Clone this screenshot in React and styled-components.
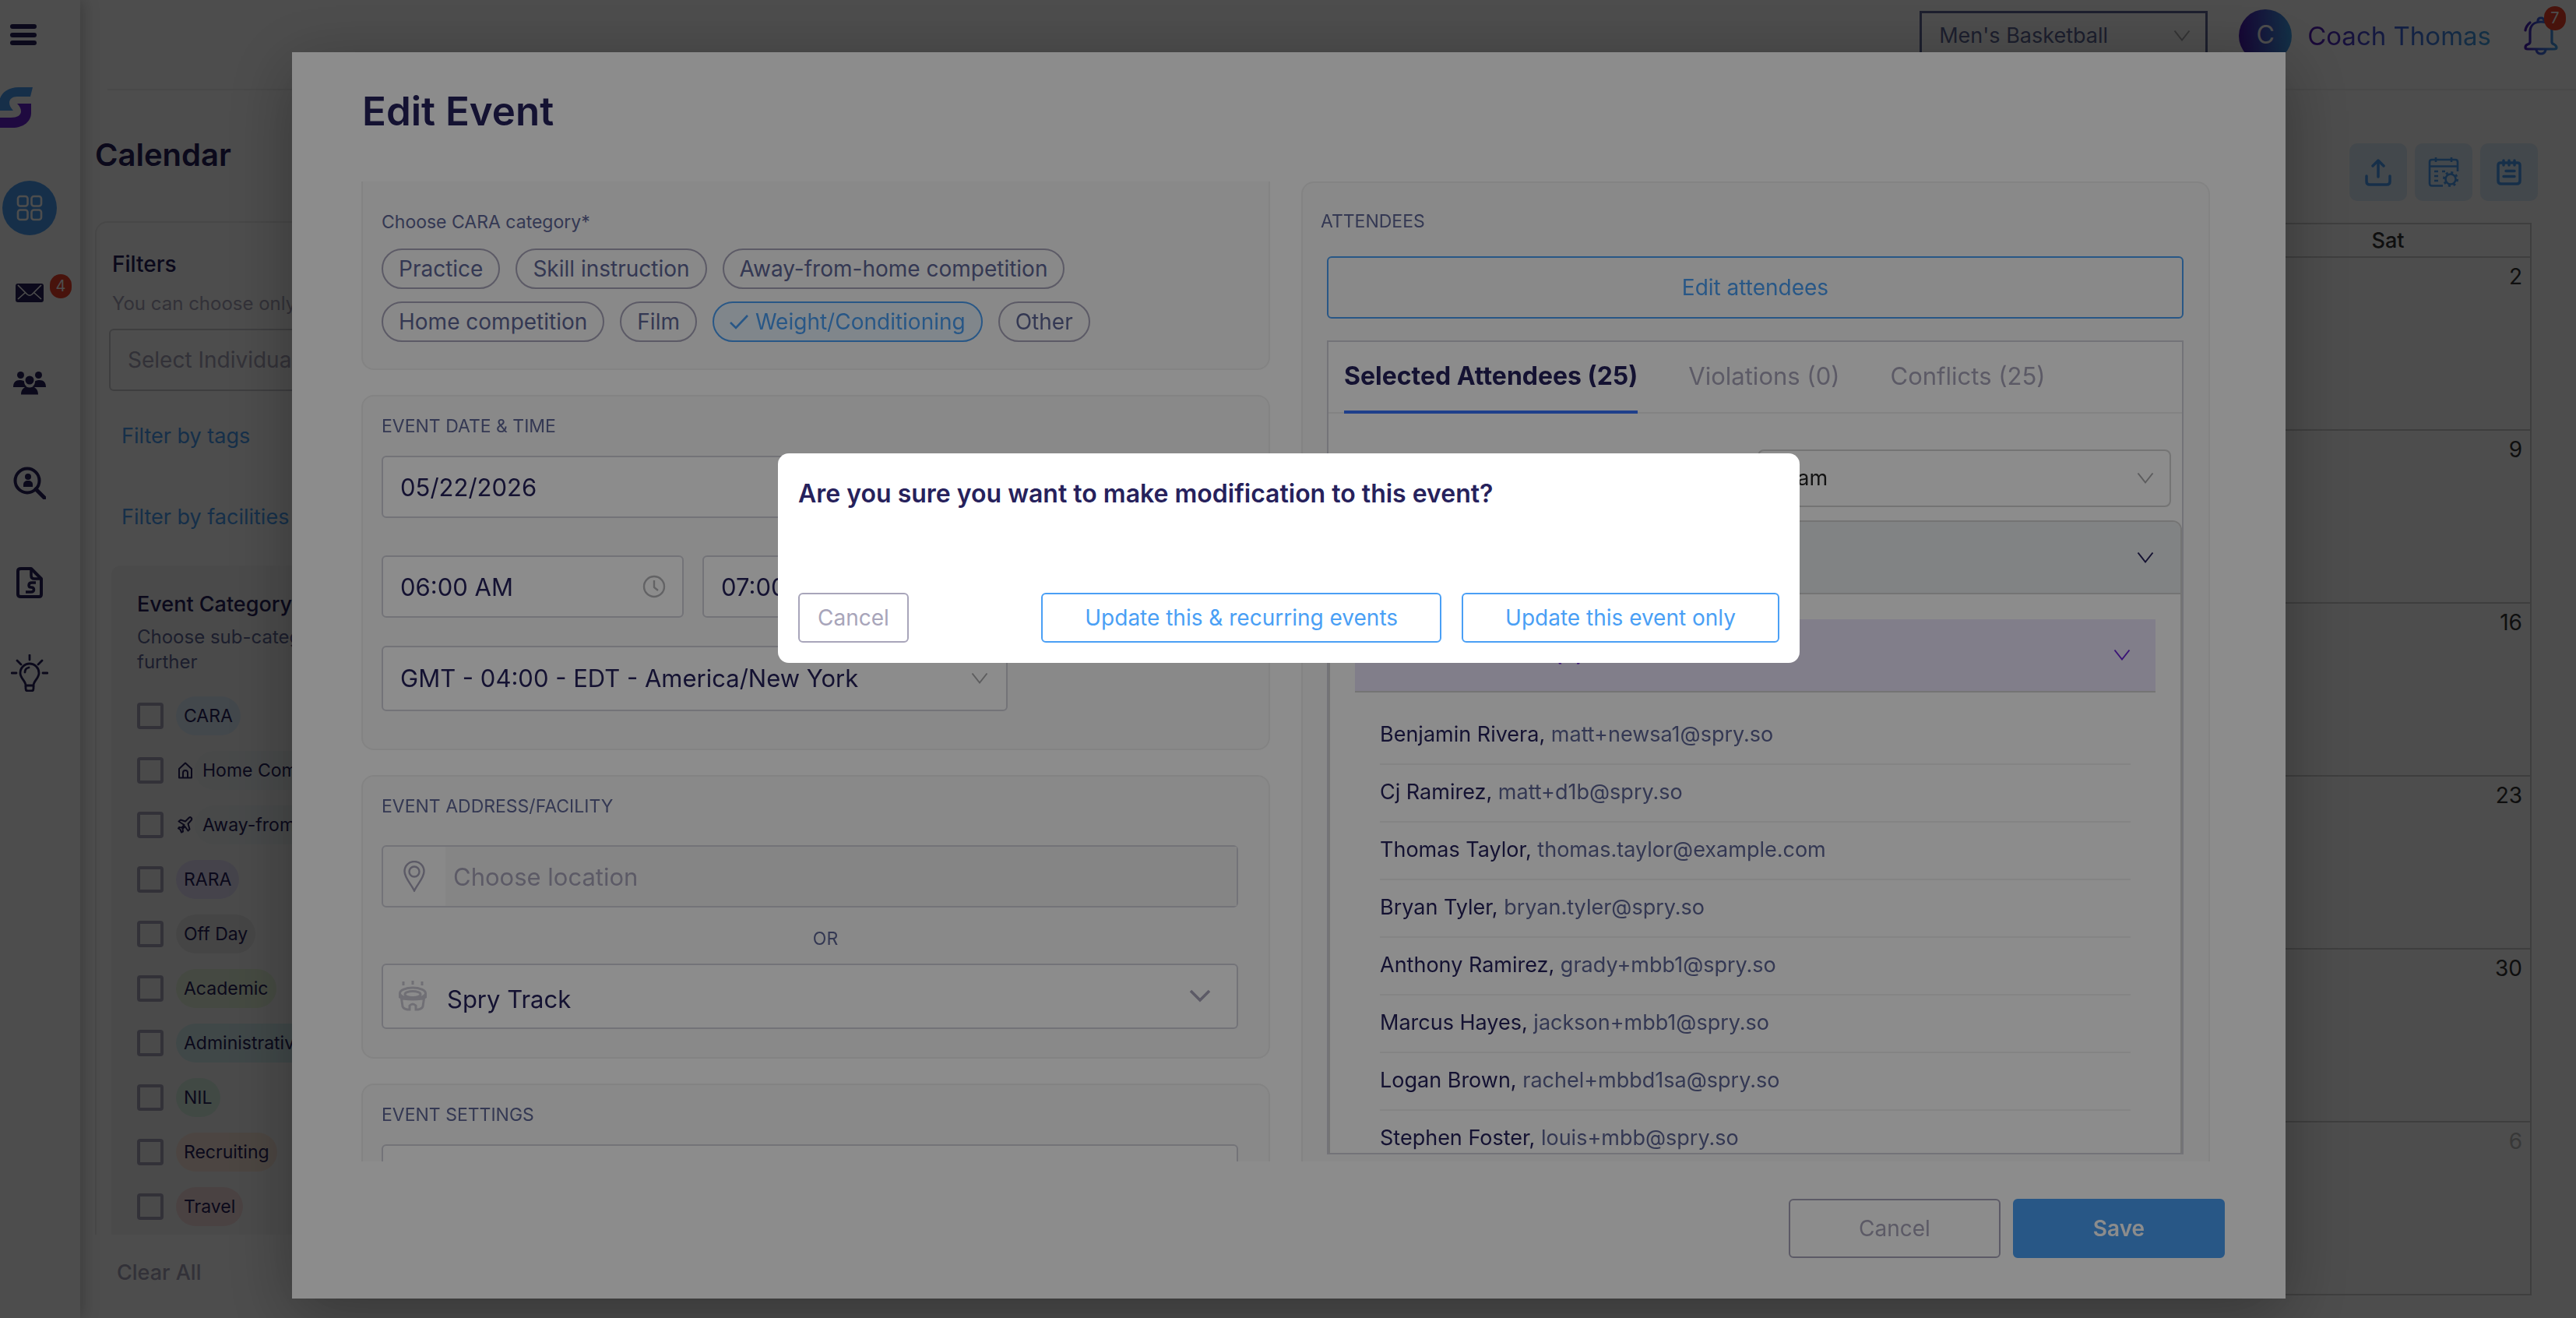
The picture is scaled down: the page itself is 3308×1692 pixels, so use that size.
import React from "react";
import styled, { createGlobalStyle } from "styled-components";

const navy = "#26215b";
const slate = "#5f6797";
const muted = "#a8a5ba";
const blue = "#4a9ff5";
const line = "#d2d2da";

const GlobalStyle = createGlobalStyle`
  * { box-sizing: border-box; }
  html, body, #root { height: 100%; }
  body {
    margin: 0;
    overflow: hidden;
    background: #fff;
    color: ${navy};
    font-family: Inter, "Liberation Sans", sans-serif;
    font-size: 28px;
    line-height: 36px;
  }
  h1, h2, h3, p, ul { margin: 0; padding: 0; }
  ul { list-style: none; }
  button, input, select { font: inherit; color: inherit; }
  a { text-decoration: none; color: inherit; }
`;

/* page shell */

const Shell = styled.div`
  display: flex;
  height: 100vh;
`;
const Sidebar = styled.nav`
  width: 103px;
  flex: none;
  display: flex;
  flex-direction: column;
  padding-top: 31px;
  box-shadow: 2px 0 20px rgba(0, 0, 0, 0.25);
  z-index: 1;
`;
const MenuButton = styled.button`
  width: 34px;
  height: 27px;
  margin-left: 13px;
  padding: 0;
  border: 0;
  background: none;
  display: flex;
  flex-direction: column;
  justify-content: space-between;

  span {
    height: 6px;
    border-radius: 3px;
    background: ${navy};
  }
`;
const Logo = styled.svg`
  display: block;
  width: 42px;
  height: 52px;
  margin: 54px 0 52px;
`;
const NavItem = styled.a`
  position: relative;
  display: flex;
  align-items: center;
  justify-content: center;
  width: 76px;
  height: ${(p) => p.$height || 116}px;
`;
const NavActive = styled.span`
  display: flex;
  align-items: center;
  justify-content: center;
  width: 70px;
  height: 70px;
  border-radius: 50%;
  background: ${blue};
`;
const Badge = styled.span`
  position: absolute;
  left: ${(p) => p.$left}px;
  top: ${(p) => p.$top}px;
  width: 28px;
  height: 31px;
  border-radius: 14px;
  background: #f04028;
  color: #fff;
  font-size: 20px;
  line-height: 31px;
  text-align: center;
`;
const Main = styled.main`
  flex: 1;
  min-width: 0;
  display: flex;
  flex-direction: column;
`;
const TopBar = styled.header`
  height: 116px;
  flex: none;
  margin-left: 35px;
  padding: 0 23px 22px 0;
  border-bottom: 2px solid #f0f0f0;
  display: flex;
  align-items: center;
  justify-content: flex-end;
`;
const TeamPicker = styled.div`
  position: relative;
  width: 370px;
  margin-right: 40px;

  select {
    appearance: none;
    width: 100%;
    height: 64px;
    padding: 0 22px;
    border: 3px solid ${slate};
    background: #fff;
    color: ${slate};
    font-size: 27px;
  }
`;
const Avatar = styled.span`
  width: 68px;
  height: 68px;
  margin-right: 20px;
  border-radius: 50%;
  background: linear-gradient(90deg, #4a18b0, #3f9fe8);
  color: #fff;
  font-size: 32px;
  line-height: 66px;
  text-align: center;
`;
const CoachName = styled.span`
  background: linear-gradient(90deg, #5414b4, #3f68e0 50%, #45a5e6);
  background-clip: text;
  color: transparent;
  font-size: 33px;
  line-height: 44px;
`;
const Bell = styled.button`
  position: relative;
  width: 44px;
  height: 50px;
  margin-left: 42px;
  padding: 0;
  border: 0;
  background: none;
`;
const TitleRow = styled.div`
  display: flex;
  justify-content: space-between;
  align-items: flex-start;
  padding: 68px 49px 0 19px;
  height: 168px;
  flex: none;

  h1 {
    font-size: 40px;
    line-height: 30px;
    font-weight: 600;
  }
`;
const Actions = styled.div`
  display: flex;
  gap: 10px;
`;
const ActionButton = styled.button`
  width: 74px;
  height: 74px;
  padding: 0;
  border: 0;
  border-radius: 10px;
  background: #dfeefb;
  display: flex;
  align-items: center;
  justify-content: center;
`;
const Content = styled.div`
  flex: 1;
  min-height: 0;
  display: flex;
  gap: 31px;
  padding: 0 57px 31px 19px;
`;

/* filters */

const FilterColumn = styled.aside`
  width: 528px;
  flex: none;
  display: flex;
  flex-direction: column;
`;
const FilterPanel = styled.section`
  flex: 1;
  min-height: 0;
  overflow: hidden;
  padding: 35px 20px 0 16px;
  border: 2px solid #ececec;
  border-bottom: 0;
  border-radius: 16px 16px 0 0;
`;
const FilterTitle = styled.h2`
  padding-left: 4px;
  font-size: 28px;
  font-weight: 500;
`;
const FilterHint = styled.p`
  padding-left: 4px;
  margin: 17px 0 16px;
  font-size: 24px;
  line-height: 32px;
  color: ${muted};
`;
const FilterInput = styled.input`
  width: 100%;
  height: 80px;
  padding: 0 22px;
  border: 2px solid #cfcfd4;
  border-radius: 6px;
  background: #fff;

  &::placeholder { color: ${muted}; opacity: 1; }
`;
const FilterLink = styled.a`
  display: block;
  margin: ${(p) => p.$space}px 0 0 16px;
  font-size: 27px;
  color: ${blue};
`;
const CategoryCard = styled.div`
  margin: 44px 0 0 3px;
  padding: 32px 32px 30px 33px;
  border-radius: 12px;
  background: #f8f8f8;

  h3 {
    font-size: 27px;
    font-weight: 500;
  }
  p {
    margin: 8px 0 28px;
    font-size: 24px;
    line-height: 32px;
    color: ${slate};
  }
  ul {
    display: flex;
    flex-direction: column;
    gap: 20px;
  }
`;
const CheckRow = styled.label`
  display: flex;
  align-items: center;
  height: 50px;

  input {
    appearance: none;
    flex: none;
    width: 34px;
    height: 34px;
    margin: 0 16px 0 0;
    border: 4px solid ${muted};
    border-radius: 4px;
  }
  svg {
    flex: none;
    margin: 0 2px;
  }
`;
const Tag = styled.span`
  padding: 0 10px;
  border-radius: 25px;
  background: ${(p) => p.$color};
  font-size: 23px;
  line-height: 50px;
  white-space: nowrap;
`;
const ClearAll = styled.button`
  align-self: flex-start;
  margin: 31px 0 9px 28px;
  padding: 0;
  border: 0;
  background: none;
  color: ${muted};
  font-size: 27px;
  font-weight: 500;
`;

/* month grid */

const MonthWrap = styled.div`
  flex: 1;
  min-width: 0;
  padding-top: 2px;
`;
const Month = styled.table`
  width: 100%;
  height: 100%;
  border-collapse: collapse;
  table-layout: fixed;
  color: #333;

  th, td { border: 2px solid #d0d0d0; }
  th {
    height: 43px;
    padding: 0;
    font-size: 27px;
    font-weight: 500;
  }
  td {
    height: 222px;
    padding: 6px 10px 0 0;
    vertical-align: top;
    text-align: right;
  }
`;
const DayNumber = styled.span`
  color: ${(p) => (p.$other ? "#bbb" : "#333")};
`;

/* event modal */

const ModalLayer = styled.div`
  position: fixed;
  inset: 0;
  z-index: 2;
  padding: 67px 373px 25px 375px;
  background: rgba(0, 0, 0, 0.45);
`;
const Modal = styled.div`
  height: 100%;
  display: flex;
  flex-direction: column;
  padding-top: 48px;
  background: #fff;
  box-shadow: 0 20px 80px rgba(0, 0, 0, 0.3);

  h2 {
    padding-left: 90px;
    font-size: 51px;
    line-height: 56px;
    font-weight: 600;
  }
`;
const ModalBody = styled.div`
  flex: 1;
  min-height: 0;
  overflow: hidden;
  margin: 62px 97px 0 89px;
  display: grid;
  grid-template-columns: 1fr 1fr;
  gap: 40px;
`;
const Column = styled.div`
  min-height: 0;
  display: flex;
  flex-direction: column;
  gap: 32px;
`;
const Card = styled.section`
  flex: none;
  padding: 22px 39px ${(p) => p.$bottom || 0}px 24px;
  border: 2px solid #efefef;
  border-radius: 16px;
  background: #f9f9f9;
`;
const ScrolledCard = styled(Card)`
  padding-top: 36px;
  border-top: 0;
  border-radius: 0 0 16px 16px;
`;
const Label = styled.label`
  display: block;
  margin-bottom: ${(p) => p.$space || 22}px;
  font-size: 23px;
  line-height: 32px;
  color: ${slate};
`;
const Pills = styled.div`
  display: flex;
  flex-wrap: wrap;
  gap: 16px 20px;
`;
const Pill = styled.button`
  display: flex;
  align-items: center;
  gap: 9px;
  height: 52px;
  padding: 0 20px;
  border: 2px solid ${(p) => (p.$on ? blue : muted)};
  border-radius: 26px;
  background: ${(p) => (p.$on ? "#eaf4fe" : "transparent")};
  color: ${(p) => (p.$on ? blue : slate)};
`;
const Field = styled.div`
  position: relative;
  width: ${(p) => p.$width || "100%"};
  margin-bottom: ${(p) => p.$space || 0}px;
`;
const fieldLook = `
  display: block;
  width: 100%;
  padding: 0 22px;
  border: 2px solid ${line};
  border-radius: 6px;
  background: #fff;
  font-size: 31px;
`;
const TextInput = styled.input`
  ${fieldLook}
  height: 80px;
`;
const Select = styled.select`
  ${fieldLook}
  appearance: none;
  height: 84px;
  padding: ${(p) => (p.$icon ? "8px 82px 0" : "0 22px")};
`;
const LocationBox = styled.div`
  display: flex;
  align-items: center;
  height: 80px;
  border: 2px solid ${line};
  border-radius: 6px;

  svg { margin: 0 25px; }
  input {
    flex: 1;
    height: 76px;
    padding: 0 10px;
    border: 0;
    background: #f3f3f3;
    font-size: 31px;
  }
  input::placeholder { color: ${muted}; opacity: 1; }
`;
const FieldIcon = styled.svg`
  position: absolute;
  top: 50%;
  transform: translateY(-50%);
  ${(p) => (p.$left ? `left: ${p.$left}px;` : `right: ${p.$right}px;`)}
  pointer-events: none;
`;
const Times = styled.div`
  display: flex;
  gap: 24px;
  width: 800px;
  margin-bottom: 36px;
`;
const Or = styled.p`
  margin: 24px 0 16px 40px;
  font-size: 23px;
  line-height: 32px;
  color: ${slate};
  text-align: center;
`;

/* attendees */

const AttendeeCard = styled(Card)`
  flex: 1;
  min-height: 0;
  display: flex;
  flex-direction: column;
  padding: 33px 32px 9px 23px;
  border-bottom: 0;
  border-radius: 16px 16px 0 0;
`;
const CardTitle = styled(Label).attrs({ as: "h3" })`
  margin: 0 0 29px;
  font-weight: 400;
`;
const OutlineButton = styled.button`
  height: ${(p) => p.$height}px;
  padding: 0 ${(p) => p.$pad || 0}px;
  border: 2px solid ${(p) => (p.$muted ? muted : blue)};
  border-radius: 6px;
  background: transparent;
  color: ${(p) => (p.$muted ? muted : blue)};
`;
const EditAttendees = styled(OutlineButton)`
  flex: none;
  margin: 0 0 28px 8px;
`;
const AttendeeBox = styled.div`
  flex: 1;
  min-height: 0;
  overflow: hidden;
  margin-left: 8px;
  border: 2px solid ${line};
  background: #fff;
`;
const Tabs = styled.div`
  display: flex;
  gap: 65px;
  height: 92px;
  padding-left: 20px;
  border-bottom: 2px solid #efefef;
`;
const Tab = styled.button`
  height: 92px;
  padding: 0;
  border: 0;
  border-bottom: 4px solid ${(p) => (p.$on ? "#3873fd" : "transparent")};
  background: none;
  color: ${(p) => (p.$on ? navy : muted)};
  font-size: ${(p) => (p.$on ? 32 : 31)}px;
  font-weight: ${(p) => (p.$on ? 700 : 400)};
`;
const GroupBy = styled.div`
  position: relative;
  width: 531px;
  margin: 46px 14px 17px auto;

  select {
    appearance: none;
    width: 100%;
    height: 74px;
    padding: 0 18px;
    border: 2px solid #d4d4d4;
    border-radius: 8px;
    background: #fff;
    color: #222;
    font-size: 27px;
  }
`;
const Accordion = styled.div`
  border: 2px solid #d4d4d4;
  border-radius: 12px 12px 0 0;
  overflow: hidden;
`;
const GroupHeader = styled.button`
  display: flex;
  align-items: center;
  justify-content: flex-end;
  width: 100%;
  height: 93px;
  padding: 0 34px;
  border: 0;
  border-bottom: 2px solid #d4d4d4;
  background: #eceef0;
`;
const RoleHeader = styled(GroupHeader)`
  justify-content: space-between;
  height: 94px;
  padding: 0 32px;
  background: #ece5fb;
  color: #6a24d8;
  font-size: 27px;
  font-weight: 600;
`;
const GroupBody = styled.div`
  padding: 32px;
`;
const People = styled.ul`
  padding: 19px 32px;
`;
const Person = styled.li`
  height: 74px;
  padding-top: 17px;
  border-bottom: 2px solid #f0f0f0;
  font-size: 27px;

  span { color: ${slate}; }
`;
const ModalFooter = styled.footer`
  display: flex;
  justify-content: flex-end;
  gap: 16px;
  padding: 48px 78px 52px;
`;
const FooterButton = styled.button`
  width: 272px;
  height: 76px;
  border: 2px solid ${(p) => (p.$primary ? blue : muted)};
  border-radius: 6px;
  background: ${(p) => (p.$primary ? blue : "#fff")};
  color: ${(p) => (p.$primary ? "#fff" : muted)};
  font-weight: ${(p) => (p.$primary ? 600 : 400)};
`;

/* confirmation */

const ConfirmLayer = styled.div`
  position: fixed;
  inset: 0;
  z-index: 3;
  display: flex;
  justify-content: center;
  align-items: flex-start;
  padding: 582px 0 0 2px;
  background: rgba(0, 0, 0, 0.45);
`;
const Confirm = styled.div`
  width: 1312px;
  max-width: 90%;
  padding: 32px 26px 26px;
  border-radius: 14px;
  background: #fff;

  h2 {
    margin-bottom: 107px;
    font-size: 32px;
    line-height: 40px;
    font-weight: 600;
  }
`;
const ConfirmActions = styled.div`
  display: flex;
  gap: 26px;

  button:first-child { margin-right: auto; }
`;

const categories = [
  { name: "CARA", color: "#dfeefb" },
  { name: "Home Competition", color: "#eef4f5", icon: "home" },
  { name: "Away-from-home Competition", color: "#eef4f5", icon: "plane" },
  { name: "RARA", color: "#e6e0fa" },
  { name: "Off Day", color: "#e8e8e8" },
  { name: "Academic", color: "#e6f5da" },
  { name: "Administrative", color: "#d6eff0" },
  { name: "NIL", color: "#d9f2e4" },
  { name: "Recruiting", color: "#fbe8da" },
  { name: "Travel", color: "#f8dcdc" },
];

const caraOptions = [
  "Practice",
  "Skill instruction",
  "Away-from-home competition",
  "Home competition",
  "Film",
  "Weight/Conditioning",
  "Other",
];

const attendees = [
  ["Benjamin Rivera", "matt+newsa1@spry.so"],
  ["Cj Ramirez", "matt+d1b@spry.so"],
  ["Thomas Taylor", "thomas.taylor@example.com"],
  ["Bryan Tyler", "bryan.tyler@spry.so"],
  ["Anthony Ramirez", "grady+mbb1@spry.so"],
  ["Marcus Hayes", "jackson+mbb1@spry.so"],
  ["Logan Brown", "rachel+mbbd1sa@spry.so"],
  ["Stephen Foster", "louis+mbb@spry.so"],
];

const saturdays = [2, 9, 16, 23, 30, 6];
const weekdays = [0, 1, 2, 3, 4, 5];

const Chevron = ({ color }) => (
  <svg width="22" height="16" viewBox="0 0 22 16" fill="none" stroke={color} strokeWidth="2">
    <path d="M1.5 1.5 11 13.5 20.5 1.5" />
  </svg>
);

const FieldChevron = ({ right }) => (
  <FieldIcon $right={right} width="22" height="16" viewBox="0 0 22 16" fill="none" stroke="#a9a9ac" strokeWidth="2">
    <path d="M1.5 1.5 11 13.5 20.5 1.5" />
  </FieldIcon>
);

const Clock = () => (
  <FieldIcon $right={23} width="30" height="30" viewBox="0 0 30 30" fill="none" stroke="#b4b4b8" strokeWidth="2.4">
    <circle cx="15" cy="15" r="13" />
    <path d="M15 7v9l5 4" />
  </FieldIcon>
);

const SmallIcon = ({ name }) => (
  <svg width="20" height="22" viewBox="0 0 20 22" fill="none" stroke={navy} strokeWidth="2" strokeLinejoin="round">
    {name === "home" ? (
      <path d="M2 9 10 1.5 18 9v11.500H2zM7 20v-6a3 3 0 0 1 6 0v6" />
    ) : (
      <path d="M1.500 6.500 4 4.500l6 2 5-5c1.500-1 4 .5 3 3l-4.500 5 2 7-2 2-4-5.500-3 3 .5 3.500-2 1-1.500-3.500L1 15.500l1-1.500 3.500.5 3-3.500z" />
    )}
  </svg>
);

class Navigation extends React.Component {
  render() {
    return (
      <Sidebar>
        <MenuButton aria-label="Menu"><span /><span /><span /></MenuButton>
        <Logo viewBox="0 0 42 52">
          <path fill="#4a9ff5" d="M42 0H24C8 0-1 10-1 20v10h18c-3-3-5-7-5-10 0-5 4-8 10-8h17z" />
          <path fill="#6a24d8" d="M22 21h18v12c0 11-10 19-24 19H-1V39h15c8 0 13-3 13-8 0-4-2-7-5-10z" />
        </Logo>
        <NavItem href="#dashboard" aria-label="Dashboard" $height={102}>
          <NavActive>
            <svg width="34" height="34" viewBox="0 0 34 34" fill="none" stroke="#fff" strokeWidth="2.600">
              <rect x="2" y="2" width="12.500" height="12.500" rx="3" />
              <rect x="19.500" y="2" width="12.500" height="12.500" rx="3" />
              <rect x="2" y="19.500" width="12.500" height="12.500" rx="3" />
              <rect x="19.500" y="19.500" width="12.500" height="12.500" rx="3" />
            </svg>
          </NavActive>
        </NavItem>
        <NavItem href="#messages" aria-label="Messages">
          <svg width="36" height="24" viewBox="0 0 36 24">
            <rect width="36" height="24" rx="3" fill={navy} />
            <path d="m3 2 12 12q3 2.500 6 0L33 2M3 20l9-8M33 20l-9-8" fill="none" stroke="#fff" strokeWidth="1.600" />
          </svg>
          <Badge $left={64} $top={34}>4</Badge>
        </NavItem>
        <NavItem href="#team" aria-label="Team">
          <svg width="42" height="30" viewBox="0 0 42 30" fill={navy}>
            <circle cx="9.500" cy="4.500" r="4.500" />
            <circle cx="32.500" cy="4.500" r="4.500" />
            <circle cx="21" cy="11" r="5.500" />
            <path d="M0 20c0-6 3-9 8-9 3 0 5 .5 6 1.500 0 3 1 5 3 6.500l-1 1zM42 20c0-6-3-9-8-9-3 0-5 .5-6 1.500 0 3-1 5-3 6.500l1 1zM10 29.500C10 23 14 20 17 19.500q4 2 8 0c3 .5 7 3.500 7 10z" />
          </svg>
        </NavItem>
        <NavItem href="#search" aria-label="Search people" $height={140}>
          <svg width="42" height="42" viewBox="0 0 42 42" fill="none" stroke={navy} strokeWidth="4">
            <circle cx="18" cy="18" r="15.500" />
            <path d="m29 29 11 11" strokeWidth="5" strokeLinecap="round" />
            <circle cx="19" cy="13" r="4" fill={navy} stroke="none" />
            <path d="M13 26v-3c0-3 2-5 6-5s6 2 6 5v3z" fill={navy} stroke="none" />
          </svg>
        </NavItem>
        <NavItem href="#documents" aria-label="Documents">
          <svg width="34" height="40" viewBox="0 0 34 40" fill="none" stroke={navy} strokeWidth="4">
            <path d="M6 2h13l13 13v20q0 3-3 3H6q-4 0-4-3V5q0-3 4-3z" strokeLinejoin="round" />
            <path d="M19 3v8q0 4 4 4h9" strokeWidth="3.500" />
            <path d="M25 20h-5q-4 0-4 3.500 0 2.500 3 2.500 3.500 0 3.500 3 0 3-4 3H12" strokeWidth="3.500" />
          </svg>
        </NavItem>
        <NavItem href="#tips" aria-label="Tips">
          <svg width="48" height="48" viewBox="0 0 48 48" fill="none" stroke={navy} strokeWidth="2.800" strokeLinecap="round">
            <path d="M24 1v6M8 8l5 5M40 8l-5 5M1 24h6M41 24h6" />
            <path d="M19 40c0-6-7-9-7-16a12 12 0 0 1 24 0c0 7-7 10-7 16z" />
            <path d="M19 41v3q0 3 3 3h4q3 0 3-3v-3M18 23q0-5 5-6" />
          </svg>
        </NavItem>
      </Sidebar>
    );
  }
}

const Header = () => (
  <TopBar>
    <TeamPicker>
      <select aria-label="Team" defaultValue="mbb">
        <option value="mbb">Men's Basketball</option>
      </select>
      <FieldChevron right={22} />
    </TeamPicker>
    <Avatar>C</Avatar>
    <CoachName>Coach Thomas</CoachName>
    <Bell aria-label="Notifications">
      <svg width="44" height="50" viewBox="0 0 44 50" fill="none" stroke="url(#bell)" strokeWidth="3.200" strokeLinecap="round">
        <defs>
          <linearGradient id="bell" gradientUnits="userSpaceOnUse" x1="0" y1="0" x2="44" y2="0">
            <stop offset="0" stopColor="#4a12b0" />
            <stop offset=".5" stopColor="#3f68e0" />
            <stop offset="1" stopColor="#45a5e6" />
          </linearGradient>
        </defs>
        <path d="M8 33V20C8 11 14 7 22 7s14 4 14 13v13q0 2 3 3 3 2 3 4 0 2-3 2H5q-3 0-3-2 0-3 3-4 3-1 3-3z" />
        <path d="M18 6q0-4 4-4t4 4M16 43q1 5 6 5t6-5M2 18Q3 12 8 8" />
      </svg>
      <Badge $left={26} $top={-13}>7</Badge>
    </Bell>
  </TopBar>
);

const Toolbar = () => (
  <TitleRow>
    <h1>Calendar</h1>
    <Actions>
      <ActionButton aria-label="Export">
        <svg width="36" height="36" viewBox="0 0 36 36" fill="none" stroke={blue} strokeWidth="3.500" strokeLinecap="round" strokeLinejoin="round">
          <path d="M18 24V3M11 10l7-7 7 7M3 23v7q0 4 4 4h22q4 0 4-4v-7" />
        </svg>
      </ActionButton>
      <ActionButton aria-label="Calendar settings">
        <svg width="40" height="38" viewBox="0 0 40 38" fill="none" stroke={blue} strokeWidth="2.600">
          <path d="M19 36.500H5q-3 0-3-3V6q0-3 3-3h30q3 0 3 3v12M2 11.500h36M10 0v6M30 0v6" />
          <path d="M8 18h5M18 18h4M8 24h5M8 30h5" />
          <circle cx="29" cy="28" r="6.500" />
          <circle cx="29" cy="28" r="8.500" strokeDasharray="3 3.675" strokeWidth="3" />
        </svg>
      </ActionButton>
      <ActionButton aria-label="Notes">
        <svg width="32" height="34" viewBox="0 0 32 34" fill="none" stroke={blue} strokeWidth="3.500" strokeLinecap="round">
          <path d="M5 5h22q3 0 3 3v20q0 4-4 4H6q-4 0-4-4V8q0-3 3-3zM9 2v6M16 2v6M23 2v6M12 15.500h11M9 22.500h14" />
        </svg>
      </ActionButton>
    </Actions>
  </TitleRow>
);

const Filters = () => (
  <FilterColumn>
    <FilterPanel>
      <FilterTitle>Filters</FilterTitle>
      <FilterHint>You can choose only one</FilterHint>
      <FilterInput aria-label="Individuals" placeholder="Select Individuals" />
      <FilterLink href="#tags" $space={40}>Filter by tags</FilterLink>
      <FilterLink href="#facilities" $space={68}>Filter by facilities</FilterLink>
      <CategoryCard>
        <h3>Event Category</h3>
        <p>Choose sub-categories to filter further</p>
        <ul>
          {categories.map((c) => (
            <li key={c.name}>
              <CheckRow>
                <input type="checkbox" />
                {c.icon && <SmallIcon name={c.icon} />}
                <Tag $color={c.color}>{c.name}</Tag>
              </CheckRow>
            </li>
          ))}
        </ul>
      </CategoryCard>
    </FilterPanel>
    <ClearAll>Clear All</ClearAll>
  </FilterColumn>
);

const MonthGrid = () => (
  <MonthWrap>
    <Month>
      <thead>
        <tr>
          {weekdays.map((d) => <th key={d} />)}
          <th>Sat</th>
        </tr>
      </thead>
      <tbody>
        {saturdays.map((day) => (
          <tr key={day}>
            {weekdays.map((d) => <td key={d} />)}
            <td><DayNumber $other={day === 6}>{day}</DayNumber></td>
          </tr>
        ))}
      </tbody>
    </Month>
  </MonthWrap>
);

const EventForm = () => (
  <Column>
    <ScrolledCard $bottom={34}>
      <Label as="p" $space={18}>Choose CARA category*</Label>
      <Pills>
        {caraOptions.map((name) => {
          const on = name === "Weight/Conditioning";
          return (
            <Pill key={name} $on={on} aria-pressed={on}>
              {on && (
                <svg width="24" height="20" viewBox="0 0 24 20" fill="none" stroke={blue} strokeWidth="2.600">
                  <path d="M1 11l7 7L23 2" />
                </svg>
              )}
              {name}
            </Pill>
          );
        })}
      </Pills>
    </ScrolledCard>

    <Card $bottom={48}>
      <Label htmlFor="date">EVENT DATE &amp; TIME</Label>
      <Field $width="804px" $space={48}>
        <TextInput id="date" defaultValue="05/22/2026" />
      </Field>
      <Times>
        <Field>
          <TextInput aria-label="Start time" defaultValue="06:00 AM" />
          <Clock />
        </Field>
        <Field>
          <TextInput aria-label="End time" defaultValue="07:00 AM" />
          <Clock />
        </Field>
      </Times>
      <Field $width="804px">
        <Select aria-label="Time zone">
          <option>GMT - 04:00 - EDT - America/New York</option>
        </Select>
        <FieldChevron right={25} />
      </Field>
    </Card>

    <Card $bottom={36}>
      <Label htmlFor="location" $space={34}>EVENT ADDRESS/FACILITY</Label>
      <LocationBox>
        <svg width="30" height="40" viewBox="0 0 30 40" fill="none" stroke={muted} strokeWidth="2.400">
          <path d="M15 38.500C11 30 2.500 22 2.500 13.500a12.500 12.500 0 0 1 25 0C27.500 22 19 30 15 38.500z" />
          <circle cx="15" cy="14" r="6.500" />
        </svg>
        <input id="location" placeholder="Choose location" />
      </LocationBox>
      <Or>OR</Or>
      <Field>
        <FieldIcon $left={21} width="38" height="40" viewBox="0 0 38 40" fill="none" stroke="#cdcbd6" strokeWidth="3">
          <ellipse cx="19" cy="16" rx="16.500" ry="7" />
          <ellipse cx="19" cy="17.500" rx="10" ry="4" />
          <path d="M2.500 16v5c5 4 28 4 33 0v-5M4.500 23l1.500 10q1 3 6 4h3v-5q4-4 8 0v5h3q5-1 6-4l1.500-10M7 6V1M19 5V0M31 6V1" />
        </FieldIcon>
        <Select aria-label="Facility" $icon>
          <option>Spry Track</option>
        </Select>
        <FieldIcon $right={35} width="28" height="18" viewBox="0 0 28 18" fill="none" stroke={muted} strokeWidth="3.600">
          <path d="m2 2 12 12L26 2" />
        </FieldIcon>
      </Field>
    </Card>

    <Card>
      <Label htmlFor="settings">EVENT SETTINGS</Label>
      <TextInput id="settings" />
    </Card>
  </Column>
);

const Attendees = () => (
  <Column>
    <AttendeeCard>
      <CardTitle>ATTENDEES</CardTitle>
      <EditAttendees $height={80}>Edit attendees</EditAttendees>
      <AttendeeBox>
        <Tabs role="tablist">
          <Tab role="tab" $on aria-selected="true">Selected Attendees (25)</Tab>
          <Tab role="tab">Violations (0)</Tab>
          <Tab role="tab">Conflicts (25)</Tab>
        </Tabs>
        <GroupBy>
          <select aria-label="Group by">
            <option>Team</option>
          </select>
          <FieldChevron right={22} />
        </GroupBy>
        <Accordion>
          <GroupHeader aria-label="Toggle team"><Chevron color={navy} /></GroupHeader>
          <GroupBody>
            <RoleHeader>
              Student Athletes (8)
              <Chevron color="#6a24d8" />
            </RoleHeader>
            <People>
              {attendees.map(([name, email]) => (
                <Person key={email}>{name}, <span>{email}</span></Person>
              ))}
            </People>
          </GroupBody>
        </Accordion>
      </AttendeeBox>
    </AttendeeCard>
  </Column>
);

const App = () => (
  <>
    <GlobalStyle />
    <Shell>
      <Navigation />
      <Main>
        <Header />
        <Toolbar />
        <Content>
          <Filters />
          <MonthGrid />
        </Content>
      </Main>
    </Shell>

    <ModalLayer>
      <Modal role="dialog" aria-labelledby="edit-title">
        <h2 id="edit-title">Edit Event</h2>
        <ModalBody>
          <EventForm />
          <Attendees />
        </ModalBody>
        <ModalFooter>
          <FooterButton>Cancel</FooterButton>
          <FooterButton $primary>Save</FooterButton>
        </ModalFooter>
      </Modal>
    </ModalLayer>

    <ConfirmLayer>
      <Confirm role="alertdialog" aria-labelledby="confirm-title">
        <h2 id="confirm-title">Are you sure you want to make modification to this event?</h2>
        <ConfirmActions>
          <OutlineButton $height={64} $pad={23} $muted>Cancel</OutlineButton>
          <OutlineButton $height={64} $pad={54}>Update this &amp; recurring events</OutlineButton>
          <OutlineButton $height={64} $pad={54}>Update this event only</OutlineButton>
        </ConfirmActions>
      </Confirm>
    </ConfirmLayer>
  </>
);

export default App;
